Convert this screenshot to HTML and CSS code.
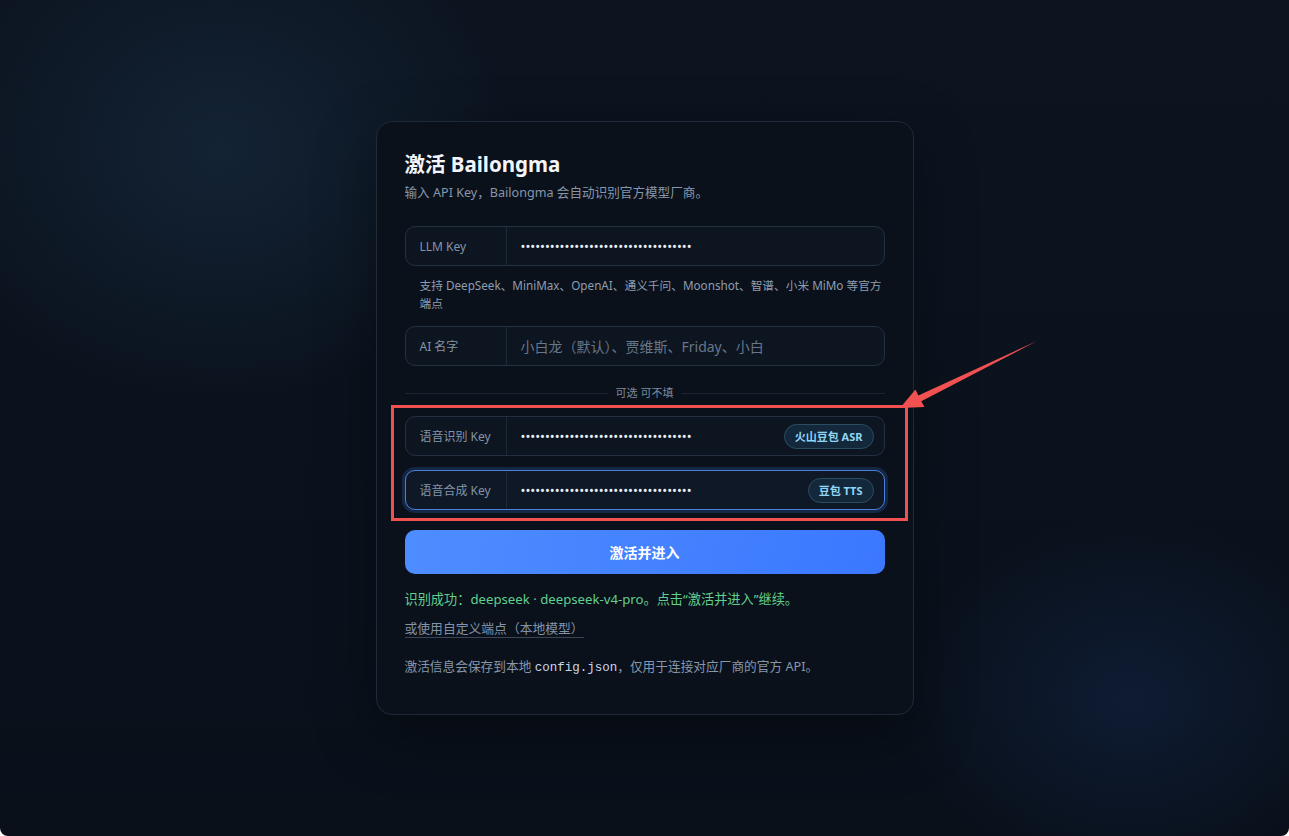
FILE: index.html
```html
<!DOCTYPE html>
<html lang="zh-CN">
<head>
    <meta charset="utf-8">
    <title>激活 Bailongma</title>
    <meta name="viewport" content="width=device-width, initial-scale=1.0">
    <link rel="stylesheet" href="styles.css">
</head>
<body>
    <div class="page">
        <div class="card">
            <h1>激活 Bailongma</h1>
            <p class="sub">输入 API Key，Bailongma 会自动识别官方模型厂商。</p>

            <div class="field">
                <label class="field-label">LLM Key</label>
                <input class="field-input" type="password" value="sk-0123456789abcdef0123456789abcdef">
            </div>
            <p class="hint">支持 DeepSeek、MiniMax、OpenAI、通义千问、Moonshot、智谱、小米 MiMo 等官方端点</p>

            <div class="field">
                <label class="field-label">AI 名字</label>
                <input class="field-input" type="text" placeholder="小白龙（默认）、贾维斯、Friday、小白">
            </div>

            <div class="divider"><span>可选 可不填</span></div>

            <div class="voice">
                <div class="field">
                    <label class="field-label">语音识别 Key</label>
                    <input class="field-input" type="password" value="asr-0123456789abcdef0123456789abcde">
                    <span class="tag">火山豆包 ASR</span>
                </div>
                <div class="field focused">
                    <label class="field-label">语音合成 Key</label>
                    <input class="field-input" type="password" value="tts-0123456789abcdef0123456789abcde">
                    <span class="tag">豆包 TTS</span>
                </div>

                <!-- annotation -->
                <div class="mark-box"></div>
                <svg class="mark-arrow" width="150" height="80" viewBox="0 0 150 80">
                    <polygon points="5,72 20.5,53.5 23.3,59.4 142,5 26.3,65.2 29.5,71" fill="#f25151"/>
                </svg>
            </div>

            <button class="btn">激活并进入</button>

            <p class="ok">识别成功：deepseek · deepseek-v4-pro。点击“激活并进入”继续。</p>
            <a class="alt" href="#">或使用自定义端点（本地模型）</a>
            <p class="note">激活信息会保存到本地 <code>config.json</code>，仅用于连接对应厂商的官方 API。</p>
        </div>
    </div>
</body>
</html>
```

FILE: styles.css
```css
html {
    background: #ffffff;
}
body {
    margin: 0;
    font-family: "Noto Sans", "Noto Sans CJK SC", sans-serif;
    color: #e6edf5;
}
.page {
    height: 836px;
    box-sizing: border-box;
    padding-top: 121px;
    display: flex;
    justify-content: center;
    align-items: flex-start;
    border-radius: 0 0 8px 8px;
    background:
        radial-gradient(ellipse 420px 360px at 220px 150px, rgba(26, 48, 70, 0.55), transparent 70%),
        radial-gradient(ellipse 320px 260px at 1130px 700px, rgba(20, 40, 80, 0.45), transparent 70%),
        linear-gradient(180deg, #0c1420 0%, #09101a 100%);
}
.card {
    width: 538px;
    height: 594px;
    box-sizing: border-box;
    padding: 26px 28px 0;
    background: #0a111b;
    border: 1px solid #1f2a39;
    border-radius: 16px;
    box-shadow: 0 20px 60px rgba(0, 0, 0, 0.35);
}
h1 {
    margin: 0;
    font-size: 20.5px;
    line-height: 32px;
    font-weight: 700;
    color: #f2f5fa;
}
.sub {
    margin: 4px 0 24px;
    font-size: 12.6px;
    line-height: 18px;
    color: #8796ab;
}
.field {
    position: relative;
    display: flex;
    align-items: center;
    height: 40px;
    box-sizing: border-box;
    border: 1px solid #233041;
    border-radius: 10px;
    background: #0d1520;
}
.field-label {
    width: 101px;
    height: 100%;
    box-sizing: border-box;
    padding-left: 14px;
    display: flex;
    align-items: center;
    font-size: 12px;
    color: #8494a9;
    border-right: 1px solid #1f2a39;
    flex-shrink: 0;
}
.field-input {
    flex: 1;
    min-width: 0;
    height: 100%;
    box-sizing: border-box;
    padding: 0 14px;
    border: none;
    outline: none;
    background: transparent;
    color: #e8eef6;
    font-family: "Noto Sans", "Noto Sans CJK SC", sans-serif;
    font-size: 13px;
}
.field-input[type="text"] {
    font-size: 14px;
}
.field-input::placeholder {
    color: #677689;
}
.hint {
    margin: 10px 0 14px;
    padding-left: 15px;
    font-size: 11.7px;
    line-height: 18px;
    color: #8f9db0;
}
.divider {
    display: flex;
    align-items: center;
    gap: 8px;
    margin: 19px 0 15px;
    font-size: 11px;
    line-height: 16px;
    color: #7c8a9e;
}
.divider::before,
.divider::after {
    content: "";
    flex: 1;
    height: 1px;
    background: #1b2532;
}
.voice {
    position: relative;
    display: flex;
    flex-direction: column;
    gap: 14px;
}
.field.focused {
    border-color: #4d7fdc;
    background: #0f1826;
    box-shadow: 0 0 0 3px rgba(40, 80, 150, 0.35);
}
.tag {
    margin-right: 10px;
    padding: 3px 10px;
    border-radius: 999px;
    background: #13283a;
    border: 1px solid #2a4d62;
    color: #8fd6f4;
    font-size: 11px;
    font-weight: 700;
    line-height: 17px;
    white-space: nowrap;
}
.mark-box {
    position: absolute;
    top: -11px;
    bottom: -11px;
    left: -14px;
    right: -23px;
    border: 3px solid #f25151;
    pointer-events: none;
}
.mark-arrow {
    position: absolute;
    left: 490px;
    top: -80px;
    overflow: visible;
}
.btn {
    display: block;
    width: 100%;
    height: 44px;
    margin-top: 20px;
    border: none;
    border-radius: 10px;
    background: linear-gradient(100deg, #4e8dff 0%, #3b78ff 100%);
    color: #ffffff;
    font-family: "Noto Sans", "Noto Sans CJK SC", sans-serif;
    font-size: 14px;
    font-weight: 700;
    cursor: pointer;
}
.ok {
    margin: 16px 0 0;
    font-size: 13.2px;
    line-height: 18px;
    color: #62cf8e;
}
.alt {
    display: inline-block;
    margin-top: 12px;
    font-size: 12.8px;
    line-height: 17px;
    color: #8593a8;
    text-decoration: none;
    border-bottom: 1px solid #3a4558;
}
.note {
    margin: 19px 0 0;
    font-size: 12.7px;
    line-height: 18px;
    color: #8796aa;
}
.note code {
    font-family: "Liberation Mono", "DejaVu Sans Mono", monospace;
    font-size: 12.5px;
    color: #c8d6ea;
}
```
